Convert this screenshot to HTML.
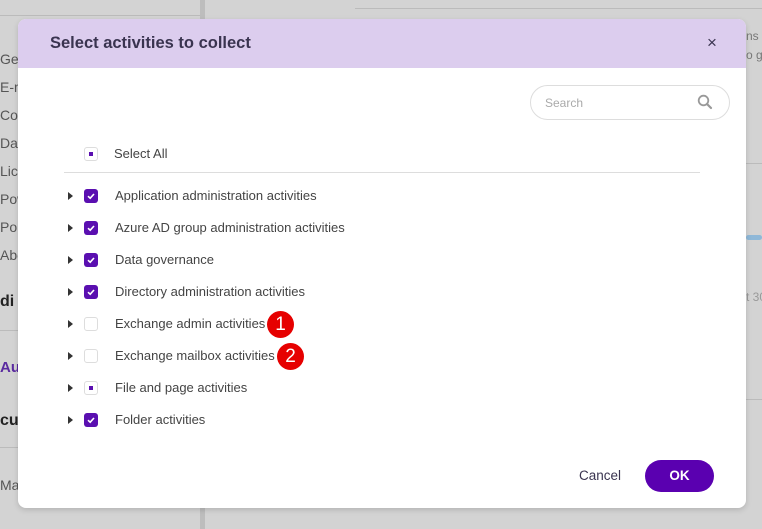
<!DOCTYPE html>
<html><head><style>
body{margin:0;width:762px;height:529px;background:#d3d3d3;position:relative;overflow:hidden;font-family:"Liberation Sans",sans-serif;}
.a{position:absolute}
.bg{color:#555;font-size:14px;white-space:nowrap}
.dlg{left:18px;top:19px;width:728px;height:489px;background:#fff;border-radius:8px;overflow:hidden;box-shadow:0 2px 6px rgba(0,0,0,.15)}
.hd{left:0;top:0;width:728px;height:49px;background:#dccdee}
.row{position:absolute;left:0;height:20px;font-size:13px;color:#444;}
.tri{position:absolute;left:50px;top:5px;width:0;height:0;border-left:5px solid #333;border-top:4px solid transparent;border-bottom:4px solid transparent}
.cb{position:absolute;left:66px;top:2px;width:14px;height:14px;border-radius:3px;box-sizing:border-box}
.on{background:#5a0fb0}
.off{border:1px solid #ddd;background:#fff}
.part{border:1px solid #ddd;background:#fff}
.part:after{content:"";position:absolute;left:4px;top:4px;width:4px;height:4px;background:#5a0fb0}
.lbl{position:absolute;left:97px;top:1px;white-space:nowrap}
.badge{position:absolute;width:27px;height:27px;border-radius:50%;background:#e60000;color:#fff;font-size:19px;text-align:center;line-height:27px;font-family:"Liberation Sans",sans-serif}
</style></head><body>
<div class="a" style="left:0;top:15px;width:200px;height:1px;background:#bbb"></div>
<div class="a" style="left:200px;top:0;width:5px;height:529px;background:#bdbdbd"></div>
<div class="a" style="left:355px;top:8px;width:407px;height:1px;background:#bbb"></div>
<div class="a bg" style="left:0;top:45px;line-height:28px">Gen<br>E-m<br>Con<br>Dat<br>Lice<br>Pow<br>Poi<br>Abo</div>
<div class="a" style="left:0;top:293px;font-size:16px;font-weight:bold;color:#222">di</div>
<div class="a" style="left:0;top:330px;width:200px;height:1px;background:#bbb"></div>
<div class="a" style="left:0;top:359px;font-size:15px;font-weight:bold;color:#5a2aa0">Au</div>
<div class="a" style="left:0;top:412px;font-size:16px;font-weight:bold;color:#222">cu</div>
<div class="a" style="left:0;top:447px;width:200px;height:1px;background:#bbb"></div>
<div class="a bg" style="left:0;top:477px">Ma</div>
<div class="a bg" style="left:746px;top:27px;font-size:12px;line-height:19px;color:#777">ns<br>o g</div>
<div class="a" style="left:746px;top:163px;width:16px;height:1px;background:#bbb"></div>
<div class="a" style="left:746px;top:235px;width:16px;height:5px;background:#8fb8d8;border-radius:3px"></div>
<div class="a bg" style="left:746px;top:290px;font-size:12px;color:#999">t 30</div>
<div class="a" style="left:746px;top:399px;width:16px;height:1px;background:#bbb"></div>

<div class="a dlg">
 <div class="a hd"></div>
 <div class="a" style="left:32px;top:15px;font-size:16.5px;font-weight:bold;color:#3a3450">Select activities to collect</div>
 <div class="a" style="left:689px;top:14px;font-size:17px;color:#3a3450">×</div>
 <div class="a" style="left:512px;top:66px;width:200px;height:35px;border:1px solid #ddd;border-radius:18px;box-sizing:border-box"></div>
 <div class="a" style="left:527px;top:77px;font-size:12px;color:#aaa">Search</div>
 <svg class="a" style="left:679px;top:75px" width="16" height="16" viewBox="0 0 16 16"><circle cx="6.5" cy="6.5" r="4.8" fill="none" stroke="#999" stroke-width="1.8"/><path d="M10 10 L14 14" stroke="#999" stroke-width="2.2" stroke-linecap="round"/></svg>
 <div class="row" style="top:126px"><div class="cb part"></div><div class="lbl" style="left:96px">Select All</div></div>
 <div class="a" style="left:46px;top:153px;width:636px;height:1px;background:#ddd"></div>
 <div class="row" style="top:168px"><div class="tri"></div><div class="cb on"><svg width="14" height="14"><path d="M4 7.2 L6.2 9.2 L10 5" fill="none" stroke="#fff" stroke-width="1.6"/></svg></div><div class="lbl">Application administration activities</div></div>
 <div class="row" style="top:200px"><div class="tri"></div><div class="cb on"><svg width="14" height="14"><path d="M4 7.2 L6.2 9.2 L10 5" fill="none" stroke="#fff" stroke-width="1.6"/></svg></div><div class="lbl">Azure AD group administration activities</div></div>
 <div class="row" style="top:232px"><div class="tri"></div><div class="cb on"><svg width="14" height="14"><path d="M4 7.2 L6.2 9.2 L10 5" fill="none" stroke="#fff" stroke-width="1.6"/></svg></div><div class="lbl">Data governance</div></div>
 <div class="row" style="top:264px"><div class="tri"></div><div class="cb on"><svg width="14" height="14"><path d="M4 7.2 L6.2 9.2 L10 5" fill="none" stroke="#fff" stroke-width="1.6"/></svg></div><div class="lbl">Directory administration activities</div></div>
 <div class="row" style="top:296px"><div class="tri"></div><div class="cb off"></div><div class="lbl">Exchange admin activities</div></div>
 <div class="row" style="top:328px"><div class="tri"></div><div class="cb off"></div><div class="lbl">Exchange mailbox activities</div></div>
 <div class="row" style="top:360px"><div class="tri"></div><div class="cb part"></div><div class="lbl">File and page activities</div></div>
 <div class="row" style="top:392px"><div class="tri"></div><div class="cb on"><svg width="14" height="14"><path d="M4 7.2 L6.2 9.2 L10 5" fill="none" stroke="#fff" stroke-width="1.6"/></svg></div><div class="lbl">Folder activities</div></div>
 <div class="badge" style="left:249px;top:292px">1</div>
 <div class="badge" style="left:259px;top:324px">2</div>
 <div class="a" style="left:561px;top:449px;font-size:13.5px;color:#3a3450">Cancel</div>
 <div class="a" style="left:627px;top:441px;width:69px;height:32px;border-radius:16px;background:#5a00b0;color:#fff;font-weight:bold;font-size:13.5px;text-align:center;line-height:32px">OK</div>
</div>
</body></html>
